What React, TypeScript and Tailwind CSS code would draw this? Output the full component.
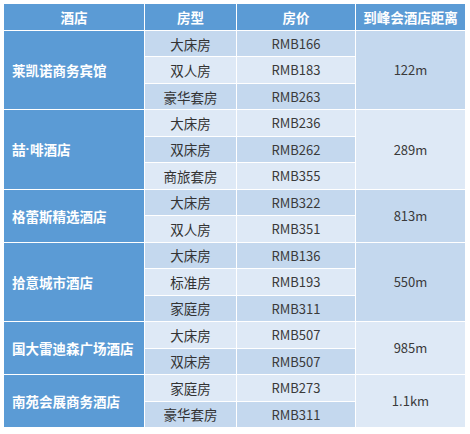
import React from "react";

type Room = { type: string; price: string };
type Hotel = { name: React.ReactNode; distance: string; rooms: Room[] };

const hotels: Hotel[] = [
  {
    name: "莱凯诺商务宾馆",
    distance: "122m",
    rooms: [
      { type: "大床房", price: "RMB166" },
      { type: "双人房", price: "RMB183" },
      { type: "豪华套房", price: "RMB263" },
    ],
  },
  {
    name: (
      <>
        喆<span className="font-['Liberation_Sans',sans-serif]">·</span>啡酒店
      </>
    ),
    distance: "289m",
    rooms: [
      { type: "大床房", price: "RMB236" },
      { type: "双床房", price: "RMB262" },
      { type: "商旅套房", price: "RMB355" },
    ],
  },
  {
    name: "格蕾斯精选酒店",
    distance: "813m",
    rooms: [
      { type: "大床房", price: "RMB322" },
      { type: "双人房", price: "RMB351" },
    ],
  },
  {
    name: "拾意城市酒店",
    distance: "550m",
    rooms: [
      { type: "大床房", price: "RMB136" },
      { type: "标准房", price: "RMB193" },
      { type: "家庭房", price: "RMB311" },
    ],
  },
  {
    name: "国大雷迪森广场酒店",
    distance: "985m",
    rooms: [
      { type: "大床房", price: "RMB507" },
      { type: "双床房", price: "RMB507" },
    ],
  },
  {
    name: "南苑会展商务酒店",
    distance: "1.1km",
    rooms: [
      { type: "家庭房", price: "RMB273" },
      { type: "豪华套房", price: "RMB311" },
    ],
  },
];

const DARK = "bg-[#c4d8ee]";
const LIGHT = "bg-[#dee9f6]";

export default function App() {
  let row = 0;
  const cells: React.ReactNode[] = [];

  hotels.forEach((h, hi) => {
    const startRow = row;
    const span = h.rooms.length;
    cells.push(
      <div
        key={`n${hi}`}
        className="flex items-center bg-[#5b9bd5] pl-2 text-[13.5px] font-bold text-white"
        style={{ gridRow: `span ${span}` }}
      >
        {h.name}
      </div>
    );
    h.rooms.forEach((r, ri) => {
      const bg = (startRow + ri) % 2 === 0 ? DARK : LIGHT;
      cells.push(
        <div key={`t${hi}-${ri}`} className={`flex items-center justify-center ${bg} text-[13.5px] text-[#333]`}>
          {r.type}
        </div>,
        <div key={`p${hi}-${ri}`} className={`flex items-center justify-center ${bg} text-[13px] text-[#3a3a3a]`}>
          {r.price}
        </div>
      );
      if (ri === 0) {
        cells.push(
          <div
            key={`d${hi}`}
            className={`flex items-center justify-center ${startRow % 2 === 0 ? DARK : LIGHT} text-[13px] text-[#3a3a3a]`}
            style={{ gridRow: `span ${span}` }}
          >
            {h.distance}
          </div>
        );
      }
    });
    row += span;
  });

  return (
    <div className="bg-white p-[4px] font-['Noto_Sans_CJK_SC','Noto_Sans',sans-serif]">
      <div className="grid w-[461px] grid-cols-[140px_91px_118px_109px] grid-rows-[26px_repeat(15,25.47px)] gap-px bg-white">
        <div className="flex items-center justify-center bg-[#5b9bd5] text-[13.5px] font-bold text-white">酒店</div>
        <div className="flex items-center justify-center bg-[#5b9bd5] text-[13.5px] font-bold text-white">房型</div>
        <div className="flex items-center justify-center bg-[#5b9bd5] text-[13.5px] font-bold text-white">房价</div>
        <div className="flex items-center justify-center bg-[#5b9bd5] text-[13.5px] font-bold text-white">到峰会酒店距离</div>
        {cells}
      </div>
    </div>
  );
}
